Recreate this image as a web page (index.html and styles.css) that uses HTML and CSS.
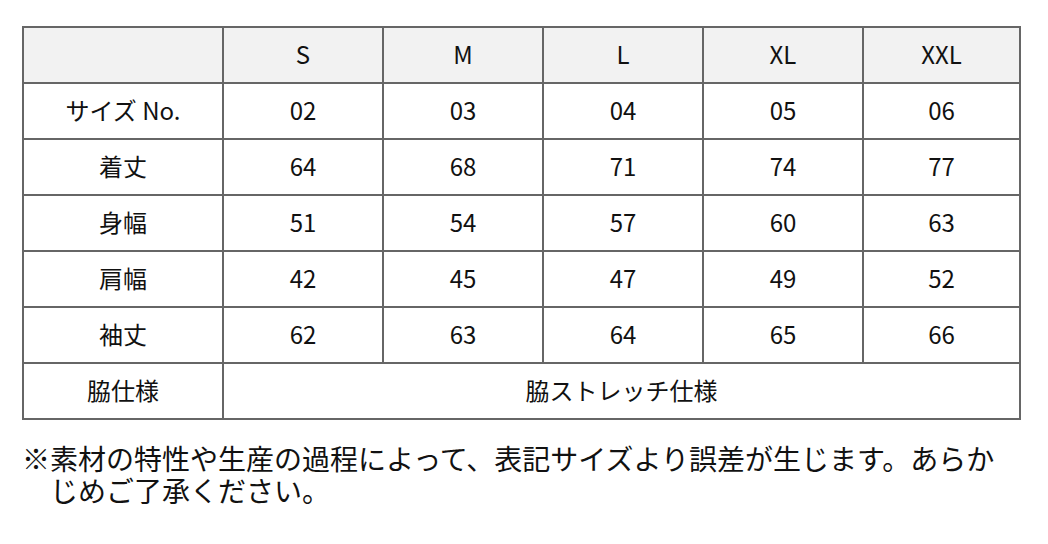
FILE: index.html
```html
<!DOCTYPE html>
<html lang="ja">
<head>
<meta charset="utf-8">
<link rel="stylesheet" href="styles.css">
</head>
<body>
<div class="page">
  <table class="size-table">
    <colgroup>
      <col class="c-label">
      <col class="c-size"><col class="c-size"><col class="c-size"><col class="c-size"><col class="c-last">
    </colgroup>
    <thead>
      <tr><th></th><th>S</th><th>M</th><th>L</th><th>XL</th><th>XXL</th></tr>
    </thead>
    <tbody>
      <tr><td>サイズ No.</td><td>02</td><td>03</td><td>04</td><td>05</td><td>06</td></tr>
      <tr><td>着丈</td><td>64</td><td>68</td><td>71</td><td>74</td><td>77</td></tr>
      <tr><td>身幅</td><td>51</td><td>54</td><td>57</td><td>60</td><td>63</td></tr>
      <tr><td>肩幅</td><td>42</td><td>45</td><td>47</td><td>49</td><td>52</td></tr>
      <tr><td>袖丈</td><td>62</td><td>63</td><td>64</td><td>65</td><td>66</td></tr>
      <tr><td>脇仕様</td><td colspan="5">脇ストレッチ仕様</td></tr>
    </tbody>
  </table>
  <p class="note">※素材の特性や生産の過程によって、表記サイズより誤差が生じます。あらかじめご了承ください。</p>
</div>
</body>
</html>
```

FILE: styles.css
```css
html, body {
  margin: 0;
  padding: 0;
  background: #fff;
}
body {
  font-family: "Noto Sans CJK JP", "Noto Sans", sans-serif;
  color: #111;
}
.page {
  padding: 26px 0 0 22px;
}
.size-table {
  border-collapse: collapse;
  width: 997px;
  table-layout: fixed;
  font-size: 24px;
}
.c-label { width: 200px; }
.c-size { width: 160px; }
.c-last { width: 157px; }
.size-table th,
.size-table td {
  border: 2px solid #666;
  height: 51px;
  padding: 0 0 3px 0;
  text-align: center;
  vertical-align: middle;
  font-weight: 400;
  line-height: 1;
}
.size-table th {
  background: #f2f2f2;
}
.note {
  margin: 22px 0 0 0;
  font-size: 28px;
  line-height: 32px;
  padding-left: 1em;
  text-indent: -1em;
  box-sizing: border-box;
  width: 1000px;
}
```
